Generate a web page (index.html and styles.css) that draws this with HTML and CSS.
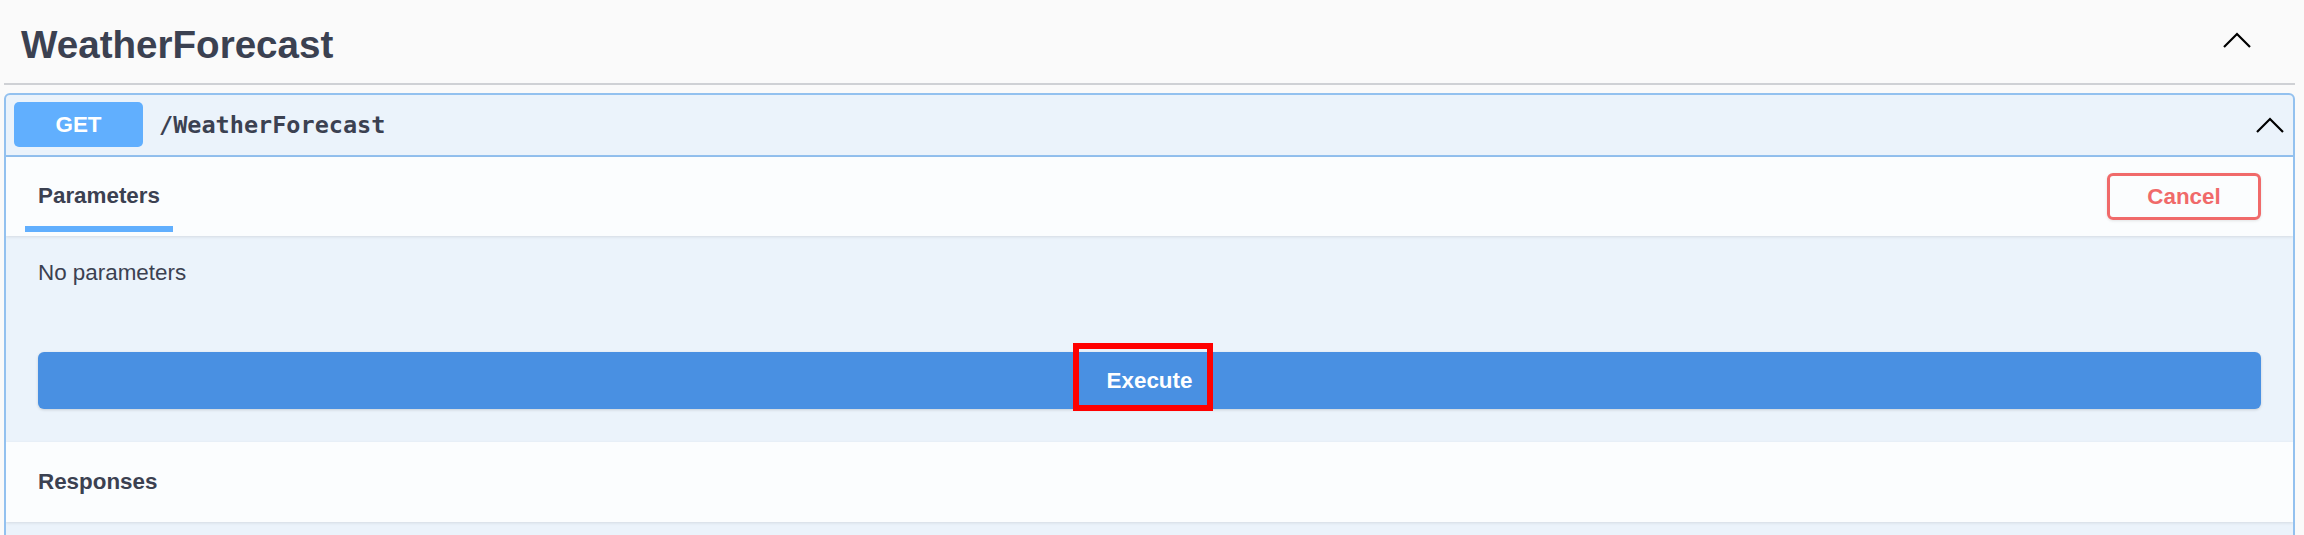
FILE: index.html
```html
<!DOCTYPE html>
<html lang="en">
<head>
    <meta charset="UTF-8">
    <meta name="viewport" content="width=device-width, initial-scale=1.0">
    <title>WeatherForecast</title>
    <link rel="stylesheet" href="styles.css">
</head>
<body>
    <div class="wrapper">
        <div class="tag-header">
            <h3 class="tag-title">WeatherForecast</h3>
            <svg class="arrow" width="28" height="16" viewBox="0 0 28 16" aria-hidden="true">
                <polyline points="1,15 14,2 27,15" fill="none" stroke="#000" stroke-width="2.2"/>
            </svg>
        </div>

        <div class="opblock">
            <div class="summary">
                <span class="method">GET</span>
                <span class="path">/WeatherForecast</span>
                <svg class="arrow" width="28" height="16" viewBox="0 0 28 16" aria-hidden="true">
                    <polyline points="1,15 14,2 27,15" fill="none" stroke="#000" stroke-width="2.2"/>
                </svg>
            </div>

            <div class="section-header">
                <div class="tab">Parameters</div>
                <button type="button" class="btn-cancel">Cancel</button>
            </div>

            <div class="params">
                <p>No parameters</p>
            </div>

            <div class="execute-wrapper">
                <button type="button" class="btn-execute">Execute<span class="highlight"></span></button>
            </div>

            <div class="section-header responses">
                <h4>Responses</h4>
            </div>
            <div class="responses-body"></div>
        </div>
    </div>
</body>
</html>
```

FILE: styles.css
```css
body {
    margin: 0;
    background-color: #fafafa;
    font-family: "Liberation Sans", Arial, sans-serif;
    color: #3b4151;
}
.wrapper {
    padding: 0 9px 0 4px;
}
.tag-header {
    display: flex;
    align-items: center;
    justify-content: space-between;
    height: 85px;
    padding: 0 44px 0 17px;
    border-bottom: 2px solid #cfd1d5;
    box-sizing: border-box;
}
.tag-header .arrow {
    margin-top: -3px;
}
.tag-title {
    margin: 6px 0 0;
    font-size: 38.6px;
    font-weight: bold;
    line-height: 44px;
}
.opblock {
    margin-top: 8px;
    background-color: #ebf3fb;
    border: 2px solid #93c1ef;
    border-radius: 6px;
    overflow: hidden;
}
.summary {
    display: flex;
    align-items: center;
    padding: 7px 9px 8px 8px;
    border-bottom: 2px solid #93c1ef;
}
.method {
    width: 129px;
    height: 45px;
    line-height: 45px;
    text-align: center;
    background-color: #61affe;
    color: #fff;
    font-size: 22.4px;
    font-weight: bold;
    border-radius: 5px;
}
.path {
    flex: 1;
    margin-left: 16px;
    font-family: "DejaVu Sans Mono", "Liberation Mono", monospace;
    font-size: 23.5px;
    font-weight: 600;
}
.section-header {
    display: flex;
    align-items: center;
    justify-content: space-between;
    height: 79px;
    padding: 0 32px 0 19px;
    background-color: rgba(255, 255, 255, 0.8);
    box-shadow: 0 1px 3px rgba(0, 0, 0, 0.1);
    position: relative;
}
.tab {
    align-self: flex-end;
    margin-bottom: 4px;
    padding: 0 13px 17px;
    font-size: 22.4px;
    font-weight: bold;
    line-height: 26px;
    border-bottom: 6px solid #61affe;
}
.btn-cancel {
    width: 154px;
    height: 47px;
    background: transparent;
    border: 3px solid #f06a6a;
    border-radius: 6px;
    color: #f06a6a;
    font-family: inherit;
    font-size: 22.4px;
    font-weight: bold;
    box-shadow: 0 1px 3px rgba(0, 0, 0, 0.1);
    cursor: pointer;
}
.params {
    padding: 24px 32px 0;
}
.params p {
    margin: 0;
    font-size: 22.4px;
    line-height: 26px;
}
.execute-wrapper {
    padding: 66px 32px 33px;
}
.btn-execute {
    position: relative;
    display: block;
    width: 100%;
    height: 57px;
    background-color: #4990e2;
    border: none;
    border-radius: 6px;
    color: #fff;
    font-family: inherit;
    font-size: 22.4px;
    font-weight: bold;
    box-shadow: 0 1px 3px rgba(0, 0, 0, 0.15);
    cursor: pointer;
}
.highlight {
    position: absolute;
    left: calc(50% - 77px);
    top: -9px;
    width: 140px;
    height: 68px;
    border: 6px solid #ff0000;
    box-sizing: border-box;
}
.responses {
    height: 80px;
    padding-left: 32px;
}
.responses h4 {
    margin: 0;
    font-size: 22.4px;
    font-weight: bold;
}
.responses-body {
    height: 40px;
}
```
